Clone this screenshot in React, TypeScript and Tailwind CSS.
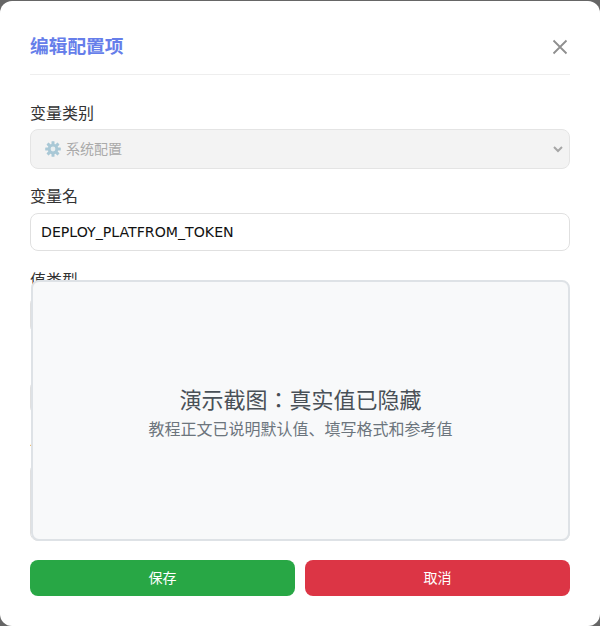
import React from "react";

const font = { fontFamily: '"DejaVu Sans", "Noto Sans CJK JP", sans-serif' };

function Gear() {
  const teeth = [0, 45, 90, 135, 180, 225, 270, 315];
  return (
    <svg width="16" height="16" viewBox="0 0 16 16" className="shrink-0">
      {teeth.map((a) => (
        <rect key={a} x="6.5" y="0.2" width="3" height="3.8" rx="0.5" fill="#a9c8d6" transform={`rotate(${a} 8 8)`} />
      ))}
      <circle cx="8" cy="8" r="5.2" fill="#a9c8d6" />
      <circle cx="8" cy="8" r="2.4" fill="#e8eef0" />
    </svg>
  );
}

function Label({ children, gap = "mb-[4px]" }: { children: React.ReactNode; gap?: string }) {
  return <div className={`h-[24px] text-[16px] leading-[24px] text-[#333333] pt-px ${gap}`}>{children}</div>;
}

export default function App() {
  return (
    <div className="w-[600px] h-[626px] bg-[#666666] overflow-hidden pt-px" style={font}>
      <div className="relative w-[600px] h-[625px] bg-white rounded-[12px] px-[30px] pt-[24px] overflow-hidden">
        <div className="flex items-center justify-between h-[50px] border-b border-[#eeeeee] pb-[5px]">
          <div className="text-[18.72px] font-bold text-[#667eea] leading-[44px]">编辑配置项</div>
          <svg width="16" height="16" viewBox="0 0 16 16" fill="none" stroke="#8f8f8f" strokeWidth="1.8" className="mr-[2px]">
            <path d="M1.5 1.5 L14.5 14.5 M14.5 1.5 L1.5 14.5" />
          </svg>
        </div>

        <div className="mt-[26px]">
          <Label>变量类别</Label>
          <div className="flex items-center h-[40px] rounded-[8px] border border-[#e4e4e4] bg-[#f3f3f3] pl-[14px] pr-[5px]">
            <Gear />
            <span className="ml-[5px] text-[14px] text-[#aaaaaa]">系统配置</span>
            <svg width="10" height="8" viewBox="0 0 10 8" fill="none" stroke="#a6a6a6" strokeWidth="2" className="ml-auto mr-[1px]">
              <path d="M1 2 L5 6 L9 2" />
            </svg>
          </div>
        </div>

        <div className="mt-[15px]">
          <Label gap="mb-[5px]">变量名</Label>
          <div className="flex items-center h-[38px] rounded-[8px] border border-[#e0e0e0] bg-white px-[10px] pt-px text-[14.15px] text-[#111111]">
            DEPLOY_PLATFROM_TOKEN
          </div>
        </div>

        <div className="mt-[17px]">
          <Label>值类型</Label>
          <div className="h-[38px] rounded-[8px] border border-[#e0e0e0] bg-white" />
        </div>

        <div className="mt-[46px]">
          <div className="h-[35px] rounded-[8px] border border-[#e0e0e0] bg-white" />
        </div>

        <div className="mt-[20px]">
          <Label>说明</Label>
          <div className="h-[78px] rounded-[8px] border border-[#e0e0e0] bg-white" />
        </div>

        <div className="absolute left-[31px] top-[279px] w-[539px] h-[261px] rounded-[8px] border-2 border-[#dee2e6] bg-[#f8f9fa] flex flex-col items-center justify-center pt-[6px]">
          <div className="text-[22px] leading-[30px] text-[#495057]">演示截图：真实值已隐藏</div>
          <div className="text-[16px] leading-[24px] text-[#6c757d] mt-[2px]">教程正文已说明默认值、填写格式和参考值</div>
        </div>

        <div className="absolute left-[30px] right-[30px] top-[559px] flex gap-[10px]">
          <div className="flex-1 h-[36px] rounded-[8px] bg-[#28a745] text-white text-[14px] flex items-center justify-center">保存</div>
          <div className="flex-1 h-[36px] rounded-[8px] bg-[#dc3545] text-white text-[14px] flex items-center justify-center">取消</div>
        </div>
      </div>
    </div>
  );
}
